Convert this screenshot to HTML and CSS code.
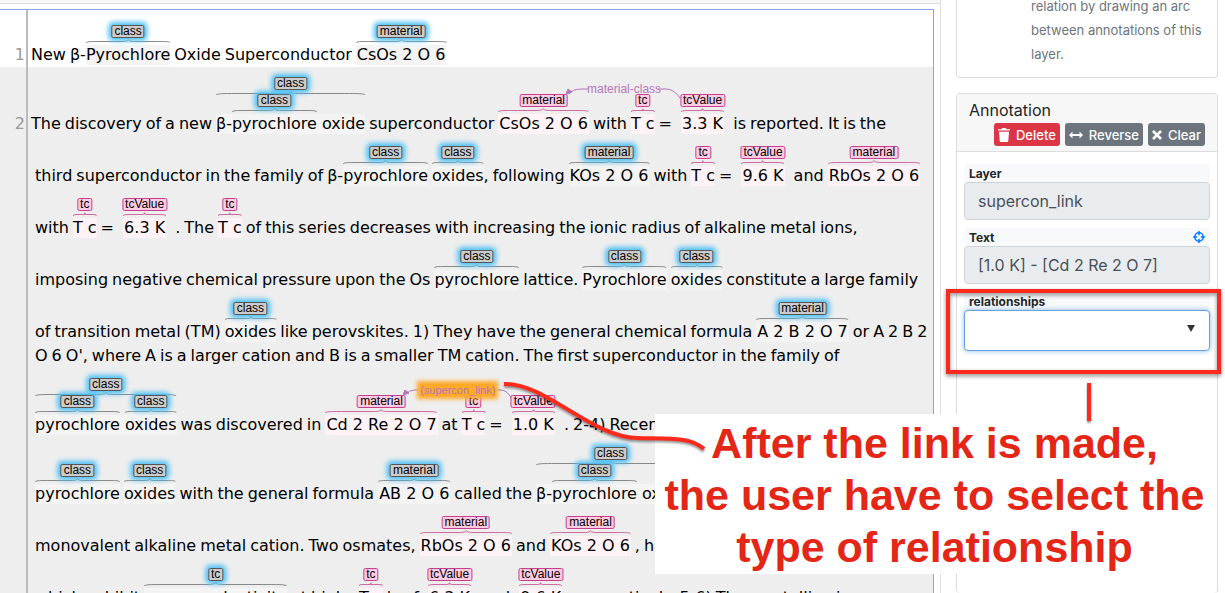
FILE: index.html
```html
<!DOCTYPE html>
<html lang="en">
<head>
<meta charset="utf-8">
<title>Annotation editor</title>
<link rel="stylesheet" href="styles.css">
</head>
<body>
<svg class="defs" aria-hidden="true">
  <symbol id="brace" viewBox="0 0 100 4" preserveAspectRatio="none">
    <path class="hairline" d="M0 4C1 2.6 4 2.5 14 2.5H44Q50 2.5 50 0.5Q50 2.5 56 2.5H86C96 2.5 99 2.6 100 4"/>
  </symbol>
</svg>
<div class="app">
  <main class="editor">
    <div class="toolbar"></div>
    <div class="document">
      <section class="sentence">
        <span class="number">1</span>
        <div class="lines">
          <p class="line first tall"><span>New</span><span>β-<span class="mark">Pyrochlore<svg class="brace"><use href="#brace"/></svg><b class="tag">class</b></span></span><span>Oxide</span><span>Superconductor</span><span class="mark formula">CsOs 2 O 6<svg class="brace"><use href="#brace"/></svg><b class="tag">material</b></span></p>
        </div>
      </section>
      <section class="sentence alt">
        <span class="number">2</span>
        <div class="lines">
          <p class="line first double"><span>The</span><span>discovery</span><span>of</span><span>a</span><span>new</span><span class="mark outer">β-<span class="mark">pyrochlore<svg class="brace"><use href="#brace"/></svg><b class="tag">class</b></span> oxide<svg class="brace"><use href="#brace"/></svg><b class="tag">class</b></span><span>superconductor</span><span class="mark pink formula">CsOs 2 O 6<svg class="brace"><use href="#brace"/></svg><b class="tag">material</b></span><span>with</span><span class="mark pink">T c<svg class="brace"><use href="#brace"/></svg><b class="tag">tc</b></span><span>= </span><span class="mark pink formula">3.3 K<svg class="brace"><use href="#brace"/></svg><b class="tag">tcValue</b><span class="link wide"><svg viewBox="0 0 116 18"><path d="M22 3H16Q6 3 3 8M92 3H100Q108 3 114 12"/><path class="tip" d="M0 8L2 3L6 6Z"/></svg><i>material-class</i></span></span><span> is</span><span>reported.</span><span>It</span><span>is</span><span>the</span></p>
          <p class="line tall"><span>third</span><span>superconductor</span><span>in</span><span>the</span><span>family</span><span>of</span><span>β-<span class="mark">pyrochlore<svg class="brace"><use href="#brace"/></svg><b class="tag">class</b></span></span><span><span class="mark">oxides<svg class="brace"><use href="#brace"/></svg><b class="tag">class</b></span>,</span><span>following</span><span class="mark formula">KOs 2 O 6<svg class="brace"><use href="#brace"/></svg><b class="tag">material</b></span><span>with</span><span class="mark pink">T c<svg class="brace"><use href="#brace"/></svg><b class="tag">tc</b></span><span>= </span><span class="mark pink formula">9.6 K<svg class="brace"><use href="#brace"/></svg><b class="tag">tcValue</b></span><span> and</span><span class="mark pink formula">RbOs 2 O 6<svg class="brace"><use href="#brace"/></svg><b class="tag">material</b></span></p>
          <p class="line tall"><span>with</span><span class="mark pink">T c<svg class="brace"><use href="#brace"/></svg><b class="tag">tc</b></span><span>= </span><span class="mark pink formula">6.3 K<svg class="brace"><use href="#brace"/></svg><b class="tag">tcValue</b></span><span> .</span><span>The</span><span class="mark pink">T c<svg class="brace"><use href="#brace"/></svg><b class="tag">tc</b></span><span>of</span><span>this</span><span>series</span><span>decreases</span><span>with</span><span>increasing</span><span>the</span><span>ionic</span><span>radius</span><span>of</span><span>alkaline</span><span>metal</span><span>ions,</span></p>
          <p class="line tall"><span>imposing</span><span>negative</span><span>chemical</span><span>pressure</span><span>upon</span><span>the</span><span>Os</span><span class="mark">pyrochlore<svg class="brace"><use href="#brace"/></svg><b class="tag">class</b></span><span>lattice.</span><span class="mark">Pyrochlore<svg class="brace"><use href="#brace"/></svg><b class="tag">class</b></span><span class="mark">oxides<svg class="brace"><use href="#brace"/></svg><b class="tag">class</b></span><span>constitute</span><span>a</span><span>large</span><span>family</span></p>
          <p class="line tall"><span>of</span><span>transition</span><span>metal</span><span>(TM)</span><span class="mark">oxides<svg class="brace"><use href="#brace"/></svg><b class="tag">class</b></span><span>like</span><span>perovskites.</span><span>1)</span><span>They</span><span>have</span><span>the</span><span>general</span><span>chemical</span><span>formula</span><span class="mark formula">A 2 B 2 O 7<svg class="brace"><use href="#brace"/></svg><b class="tag">material</b></span><span>or</span><span>A</span><span>2</span><span>B</span><span>2</span></p>
          <p class="line"><span>O</span><span>6</span><span>O',</span><span>where</span><span>A</span><span>is</span><span>a</span><span>larger</span><span>cation</span><span>and</span><span>B</span><span>is</span><span>a</span><span>smaller</span><span>TM</span><span>cation.</span><span>The</span><span>first</span><span>superconductor</span><span>in</span><span>the</span><span>family</span><span>of</span></p>
          <p class="line double"><span class="mark outer"><span class="mark">pyrochlore<svg class="brace"><use href="#brace"/></svg><b class="tag">class</b></span> <span class="mark">oxides<svg class="brace"><use href="#brace"/></svg><b class="tag">class</b></span><svg class="brace"><use href="#brace"/></svg><b class="tag">class</b></span><span>was</span><span>discovered</span><span>in</span><span class="mark pink formula">Cd 2 Re 2 O 7<svg class="brace"><use href="#brace"/></svg><b class="tag">material</b></span><span>at</span><span class="mark pink">T c<svg class="brace"><use href="#brace"/></svg><b class="tag">tc</b></span><span>= </span><span class="mark pink formula">1.0 K<svg class="brace"><use href="#brace"/></svg><b class="tag">tcValue</b><span class="link"><svg viewBox="0 0 110 18"><path d="M16 3H12Q6 3 3 7M94 3H98Q104 3 109 12"/><path class="tip" d="M0 8L2 3L6 6Z"/></svg><i class="selected">(supercon_link)</i></span></span><span> .</span><span>2-4)</span><span>Recen</span></p>
          <p class="line double"><span class="mark">pyrochlore<svg class="brace"><use href="#brace"/></svg><b class="tag">class</b></span><span class="mark">oxides<svg class="brace"><use href="#brace"/></svg><b class="tag">class</b></span><span>with</span><span>the</span><span>general</span><span>formula</span><span class="mark formula">AB 2 O 6<svg class="brace"><use href="#brace"/></svg><b class="tag">material</b></span><span>called</span><span>the</span><span class="mark outer">β-<span class="mark">pyrochlore<svg class="brace"><use href="#brace"/></svg><b class="tag">class</b></span> oxide<svg class="brace"><use href="#brace"/></svg><b class="tag">class</b></span></p>
          <p class="line tall"><span>monovalent</span><span>alkaline</span><span>metal</span><span>cation.</span><span>Two</span><span>osmates,</span><span class="mark pink formula">RbOs 2 O 6<svg class="brace"><use href="#brace"/></svg><b class="tag">material</b></span><span>and</span><span class="mark pink formula">KOs 2 O 6<svg class="brace"><use href="#brace"/></svg><b class="tag">material</b></span><span>,</span><span>have</span></p>
          <p class="line tall"><span>which</span><span>exhibit</span><span class="mark">superconductivity<svg class="brace"><use href="#brace"/></svg><b class="tag">tc</b></span><span>at</span><span>high</span><span> </span><span class="mark pink">T c<svg class="brace"><use href="#brace"/></svg><b class="tag">tc</b></span><span>'s</span><span>of </span><span class="mark pink formula">6.3 K<svg class="brace"><use href="#brace"/></svg><b class="tag">tcValue</b></span><span> and </span><span class="mark pink formula">9.6 K<svg class="brace"><use href="#brace"/></svg><b class="tag">tcValue</b></span><span>,</span><span>respectively.</span><span>5-6)</span><span>The</span><span>crystalline</span><span>is</span></p>
        </div>
      </section>
    </div>
  </main>
  <aside class="sidebar">
    <div class="card help"><p>relation by drawing an arc between annotations of this layer.</p></div>
    <form class="card panel">
      <header class="panel-head">
        <h2>Annotation</h2>
        <div class="actions">
          <button type="button" class="btn danger"><svg width="12" height="14" viewBox="0 0 12 14"><path d="M0 1.2H3.5L4 0H8L8.500 1.200H12V2.600H0ZM1 3.800H11L10.300 13Q10.200 14 9.300 14H2.700Q1.800 14 1.700 13Z"/></svg>Delete</button>
          <button type="button" class="btn"><svg width="14" height="8" viewBox="0 0 14 8"><path d="M0 4L3.500 0.500V3H10.500V0.500L14 4L10.500 7.500V5H3.500V7.500Z"/></svg>Reverse</button>
          <button type="button" class="btn"><svg width="10" height="10" viewBox="0 0 10 10"><path d="M1 1L9 9M9 1L1 9" stroke="#fff" stroke-width="2.500"/></svg>Clear</button>
        </div>
      </header>
      <div class="fields">
        <div class="field"><label for="layer">Layer</label><input id="layer" type="text" value="supercon_link" readonly></div>
        <div class="field"><label for="text">Text<svg class="target" width="12" height="12" viewBox="0 0 12 12"><circle cx="6" cy="6" r="4.200"/><path d="M6 0V4.200M6 7.800V12M0 6H4.200M7.800 6H12"/></svg></label><input id="text" type="text" value="[1.0 K] - [Cd 2 Re 2 O 7]" readonly></div>
        <div class="field"><label for="rel">relationships</label><div class="picker"><select id="rel"><option></option></select><svg width="8" height="7" viewBox="0 0 8 7"><path d="M0 0H8L4 7Z"/></svg></div></div>
      </div>
    </form>
  </aside>
  <div class="highlight"></div>
  <p class="callout">After the link is made,<br>the user have to select the<br>type of relationship</p>
  <svg class="pointers" width="1225" height="593" viewBox="0 0 1225 593"><path d="M504 384C545 382 592 438 638 438C664 439 690 436 704 449M1089 383V421"/></svg>
</div>
</body>
</html>
```
FILE: styles.css
```css
* { box-sizing: border-box; }
body { margin: 0; background: #fff; font-family: Inter, "Liberation Sans", sans-serif; color: #212529; }
.defs { position: absolute; width: 0; height: 0; }
.app { position: relative; display: flex; height: 100vh; overflow: hidden; }

/* document view */
.editor { flex: 1; min-width: 0; height: 100vh; overflow: hidden; padding-right: 6px; border-right: 1px solid #dedede; }
.toolbar { height: 4px; margin-right: -6px; background: #f7f7f7; border-bottom: 1px solid #dedede; }
.document { margin-top: 5px; border: 1px solid #86a3ea; border-left: 0; font-family: "DejaVu Sans", sans-serif; font-size: 16px; line-height: 24px; color: #000; }
.sentence { display: flex; }
.alt { background: #eee; }
.number { display: flex; flex: none; width: 28px; justify-content: flex-end; padding: 33px 1px 0 0; border-right: 2px solid #bbb; color: #999; }
.alt .number { padding-top: 45px; }
.lines { flex: 1; min-width: 0; }
.line { display: flex; align-items: flex-end; gap: 4px; height: 24px; margin: 0; padding-left: 7px; white-space: pre; }
.first { padding-left: 3px; }
.tall { height: 52px; }
.double { height: 69px; }
.sentence:first-child .line { height: 57px; }
.mark { position: relative; display: inline-block; background: linear-gradient(#f4f4f4, #f4f4f4) 0 2px / 100% 20px no-repeat; }
.formula { padding: 0 1px; }
.pink { background-image: linear-gradient(#fff3f8, #fff3f8); }
.brace { position: absolute; left: 0; top: -4px; width: 100%; height: 4px; color: #888; overflow: visible; }
.hairline { fill: none; stroke: currentColor; stroke-width: 1px; vector-effect: non-scaling-stroke; }
.pink > .brace { color: #d06aa0; }
.tag { position: absolute; z-index: 1; left: 50%; top: -18px; transform: translateX(-50%); height: 13px; padding: 0 2px; border: 1px solid #555; border-radius: 2px; background: #ccc; box-shadow: 0 0 5px 3px #4fc0f5; font: 12px/11px "Liberation Sans", sans-serif; }
.pink > .tag { border-color: #c7408b; background: #ffcce3; box-shadow: none; }
.outer > .brace { top: -21px; }
.outer > .tag { top: -35px; }
.link { position: absolute; right: calc(100% - 1px); top: -29px; display: flex; width: 110px; height: 18px; justify-content: center; font: 12px/12px "Liberation Sans", sans-serif; color: #b377b8; }
.link.wide { width: 116px; }
.link svg { position: absolute; inset: 0; top: 3px; fill: none; stroke: #b377b8; }
.link .tip { fill: #b377b8; }
.link i { font-style: normal; z-index: 2; height: 12px; }
.selected { background: #ffa928; box-shadow: 0 0 4px 3px #ffa928; font-size: 11px; }

/* side panel */
.sidebar { width: 284px; height: 100vh; padding: 0 7px 0 15px; display: flex; flex-direction: column; gap: 15px; }
.card { border: 1px solid #dcdcdc; border-radius: 4px; background: #fff; }
.help { height: 78px; flex: none; padding: 0 12px 0 74px; display: flex; align-items: flex-end; border-top: 0; border-radius: 0 0 4px 4px; }
.help p { margin: 0 0 11px; font-size: 13px; line-height: 24px; color: #6c757d; }
.panel { flex: 1; border-bottom: 0; }
.panel-head { padding: 4px 12px 5px; background: #f7f7f7; border-bottom: 1px solid #dcdcdc; }
.panel h2 { margin: 0; font-size: 16px; font-weight: 400; line-height: 24px; }
.actions { display: flex; justify-content: flex-end; gap: 5px; margin-top: 1px; }
.btn { display: flex; align-items: center; gap: 6px; height: 23px; padding: 0 4px; border: 0; border-radius: 3px; background: #6c757d; color: #fff; font: 500 13px/20px Inter, sans-serif; }
.btn svg { fill: #fff; }
.danger { background: #dc3545; }
.fields { display: flex; flex-direction: column; gap: 8px; padding: 12px 7px; }
.field label { display: flex; justify-content: space-between; align-items: center; height: 18px; padding: 0 5px; background: #f8f9fa; border-radius: 4px 4px 0 0; font-size: 12px; font-weight: 700; }
.field input { display: block; width: 100%; height: 38px; padding: 0 13px; border: 1px solid #ced4da; border-radius: 4px; background: #e9ecef; color: #495057; font: 16px/24px Inter, sans-serif; }
.target { fill: none; stroke: #007bff; stroke-width: 1.5; }
.picker { position: relative; }
.picker select { display: block; width: 100%; height: 41px; border: 1px solid #66a3dc; border-radius: 4px; background: #fff; appearance: none; box-shadow: 0 0 5px #80b5e8; }
.picker svg { position: absolute; right: 15px; top: 15px; fill: #333; }

/* tutorial overlay */
.highlight { position: absolute; left: 946px; top: 289px; width: 275px; height: 85px; border: 4px solid #fb2a1c; filter: drop-shadow(0 2px 2px #0007); }
.callout { position: absolute; left: 655px; top: 414px; width: 559px; height: 160px; margin: 0; padding: 3px 0 0; background: #fff; color: #e42617; text-align: center; white-space: nowrap; font: 700 43px/52px "Liberation Sans", sans-serif; z-index: 3; }
.pointers { position: absolute; z-index: 4; left: 0; top: 0; fill: none; stroke: #fb2a1c; stroke-width: 4; filter: drop-shadow(0 2px 1px #0006); pointer-events: none; }
```
